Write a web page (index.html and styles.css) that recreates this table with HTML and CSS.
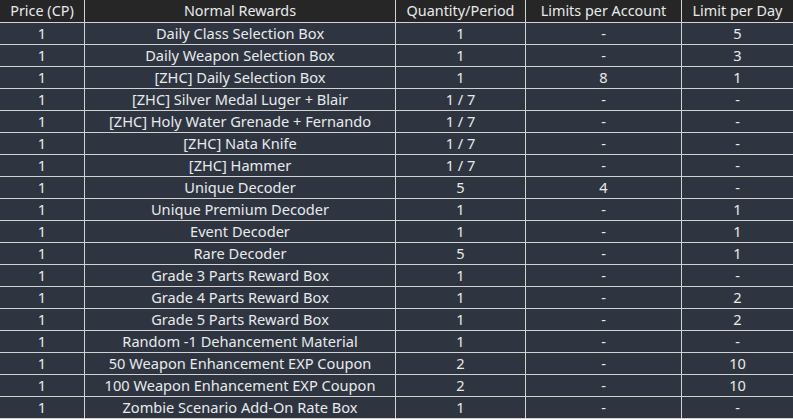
FILE: index.html
```html
<!DOCTYPE html>
<html lang="en">
<head>
<meta charset="utf-8">
<title>Normal Rewards</title>
<link rel="stylesheet" href="styles.css">
</head>
<body>
<div class="rewards" role="table">
  <div class="cell head">Price (CP)</div><div class="cell head">Normal Rewards</div><div class="cell head">Quantity/Period</div><div class="cell head">Limits per Account</div><div class="cell head">Limit per Day</div>
  <div class="cell">1</div><div class="cell">Daily Class Selection Box</div><div class="cell">1</div><div class="cell">-</div><div class="cell">5</div>
  <div class="cell">1</div><div class="cell">Daily Weapon Selection Box</div><div class="cell">1</div><div class="cell">-</div><div class="cell">3</div>
  <div class="cell">1</div><div class="cell">[ZHC] Daily Selection Box</div><div class="cell">1</div><div class="cell">8</div><div class="cell">1</div>
  <div class="cell">1</div><div class="cell">[ZHC] Silver Medal Luger + Blair</div><div class="cell">1 / 7</div><div class="cell">-</div><div class="cell">-</div>
  <div class="cell">1</div><div class="cell">[ZHC] Holy Water Grenade + Fernando</div><div class="cell">1 / 7</div><div class="cell">-</div><div class="cell">-</div>
  <div class="cell">1</div><div class="cell">[ZHC] Nata Knife</div><div class="cell">1 / 7</div><div class="cell">-</div><div class="cell">-</div>
  <div class="cell">1</div><div class="cell">[ZHC] Hammer</div><div class="cell">1 / 7</div><div class="cell">-</div><div class="cell">-</div>
  <div class="cell">1</div><div class="cell">Unique Decoder</div><div class="cell">5</div><div class="cell">4</div><div class="cell">-</div>
  <div class="cell">1</div><div class="cell">Unique Premium Decoder</div><div class="cell">1</div><div class="cell">-</div><div class="cell">1</div>
  <div class="cell">1</div><div class="cell">Event Decoder</div><div class="cell">1</div><div class="cell">-</div><div class="cell">1</div>
  <div class="cell">1</div><div class="cell">Rare Decoder</div><div class="cell">5</div><div class="cell">-</div><div class="cell">1</div>
  <div class="cell">1</div><div class="cell">Grade 3 Parts Reward Box</div><div class="cell">1</div><div class="cell">-</div><div class="cell">-</div>
  <div class="cell">1</div><div class="cell">Grade 4 Parts Reward Box</div><div class="cell">1</div><div class="cell">-</div><div class="cell">2</div>
  <div class="cell">1</div><div class="cell">Grade 5 Parts Reward Box</div><div class="cell">1</div><div class="cell">-</div><div class="cell">2</div>
  <div class="cell">1</div><div class="cell">Random -1 Dehancement Material</div><div class="cell">1</div><div class="cell">-</div><div class="cell">-</div>
  <div class="cell">1</div><div class="cell">50 Weapon Enhancement EXP Coupon</div><div class="cell">2</div><div class="cell">-</div><div class="cell">10</div>
  <div class="cell">1</div><div class="cell">100 Weapon Enhancement EXP Coupon</div><div class="cell">2</div><div class="cell">-</div><div class="cell">10</div>
  <div class="cell">1</div><div class="cell">Zombie Scenario Add-On Rate Box</div><div class="cell">1</div><div class="cell">-</div><div class="cell">-</div>
</div>
</body>
</html>
```
FILE: styles.css
```css
html, body {
  margin: 0;
  padding: 0;
  background: #2f3540;
}
.rewards {
  display: grid;
  grid-template-columns: 84px 310px 129px 155px 111px;
  grid-template-rows: 22px repeat(18, 21px);
  gap: 1px;
  padding-bottom: 1px;
  width: 793px;
  background: #d2d2d2;
  font-family: "Noto Sans", "Open Sans", sans-serif;
  font-size: 14.6px;
  color: #e8eaec;
}
.cell {
  background: #2f3540;
  text-align: center;
  line-height: 21px;
  white-space: nowrap;
  overflow: hidden;
}
.head {
  background: #262626;
  line-height: 22px;
  font-size: 14.4px;
}
```
